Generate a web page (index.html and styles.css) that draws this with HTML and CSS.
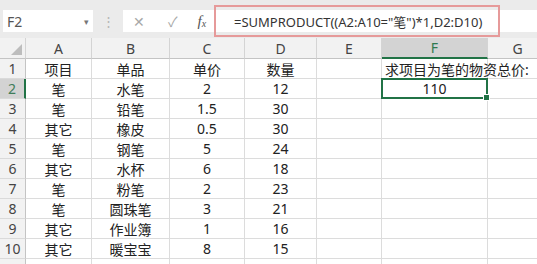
FILE: index.html
```html
<!DOCTYPE html>
<html lang="zh">
<head>
    <meta charset="UTF-8">
    <title>SUMPRODUCT</title>
    <link rel="stylesheet" href="styles.css">
</head>
<body>
    <div class="toolbar">
        <div class="name-box">
            <span>F2</span>
            <span class="arrow">▾</span>
        </div>
        <div class="dots">⋮</div>
        <div class="formula-bar">
            <div class="bar-icons">
                <span class="icon cancel">✕</span>
                <span class="icon enter">✓</span>
                <span class="icon fx">f<sub>x</sub></span>
            </div>
            <div class="formula-text">=SUMPRODUCT((A2:A10="笔")*1,D2:D10)</div>
        </div>
        <div class="mark"></div>
    </div>

    <div class="sheet">
        <div class="corner"><span class="tri"></span></div>
        <div class="col-head">A</div>
        <div class="col-head">B</div>
        <div class="col-head">C</div>
        <div class="col-head">D</div>
        <div class="col-head">E</div>
        <div class="col-head active">F</div>
        <div class="col-head">G</div>

        <div class="row-head">1</div>
        <div class="cell">项目</div><div class="cell">单品</div><div class="cell">单价</div><div class="cell">数量</div><div class="cell"></div>
        <div class="cell left">求项目为笔的物资总价:</div><div class="cell"></div>

        <div class="row-head active">2</div>
        <div class="cell">笔</div><div class="cell">水笔</div><div class="cell">2</div><div class="cell">12</div><div class="cell"></div>
        <div class="cell selected">110<span class="handle"></span></div><div class="cell"></div>

        <div class="row-head">3</div>
        <div class="cell">笔</div><div class="cell">铅笔</div><div class="cell">1.5</div><div class="cell">30</div><div class="cell"></div><div class="cell"></div><div class="cell"></div>

        <div class="row-head">4</div>
        <div class="cell">其它</div><div class="cell">橡皮</div><div class="cell">0.5</div><div class="cell">30</div><div class="cell"></div><div class="cell"></div><div class="cell"></div>

        <div class="row-head">5</div>
        <div class="cell">笔</div><div class="cell">钢笔</div><div class="cell">5</div><div class="cell">24</div><div class="cell"></div><div class="cell"></div><div class="cell"></div>

        <div class="row-head">6</div>
        <div class="cell">其它</div><div class="cell">水杯</div><div class="cell">6</div><div class="cell">18</div><div class="cell"></div><div class="cell"></div><div class="cell"></div>

        <div class="row-head">7</div>
        <div class="cell">笔</div><div class="cell">粉笔</div><div class="cell">2</div><div class="cell">23</div><div class="cell"></div><div class="cell"></div><div class="cell"></div>

        <div class="row-head">8</div>
        <div class="cell">笔</div><div class="cell">圆珠笔</div><div class="cell">3</div><div class="cell">21</div><div class="cell"></div><div class="cell"></div><div class="cell"></div>

        <div class="row-head">9</div>
        <div class="cell">其它</div><div class="cell">作业簿</div><div class="cell">1</div><div class="cell">16</div><div class="cell"></div><div class="cell"></div><div class="cell"></div>

        <div class="row-head">10</div>
        <div class="cell">其它</div><div class="cell">暖宝宝</div><div class="cell">8</div><div class="cell">15</div><div class="cell"></div><div class="cell"></div><div class="cell"></div>

        <div class="row-head"></div>
        <div class="cell"></div><div class="cell"></div><div class="cell"></div><div class="cell"></div><div class="cell"></div><div class="cell"></div><div class="cell"></div>
    </div>
</body>
</html>
```

FILE: styles.css
```css
body {
    margin: 0;
    width: 537px;
    height: 264px;
    overflow: hidden;
    background-color: white;
    font-family: "Noto Sans", "Noto Sans CJK SC", sans-serif;
    font-size: 14px;
    color: #222;
}
.toolbar {
    position: relative;
    height: 38px;
    background-color: #ebebeb;
    display: flex;
    align-items: flex-start;
    padding-top: 10px;
    box-sizing: border-box;
}
.name-box {
    margin-left: 3px;
    width: 90px;
    height: 22px;
    background-color: white;
    display: flex;
    align-items: center;
    justify-content: space-between;
    padding: 0 4px;
    box-sizing: border-box;
    color: #555;
    font-size: 14px;
}
.name-box .arrow {
    font-size: 9px;
    color: #777;
}
.dots {
    width: 30px;
    height: 22px;
    line-height: 22px;
    text-align: center;
    color: #b5b5b5;
    font-size: 13px;
}
.formula-bar {
    flex: 1;
    height: 22px;
    background-color: white;
    display: flex;
    align-items: center;
}
.bar-icons {
    width: 92px;
    height: 22px;
    display: flex;
    align-items: center;
    border-right: 1px solid #d6d6d6;
    box-sizing: border-box;
}
.icon {
    color: #a8a8a8;
    font-size: 14px;
}
.cancel {
    margin-left: 10px;
}
.enter {
    margin-left: 23px;
}
.fx {
    margin-left: 20px;
    font-family: "Liberation Serif", serif;
    font-style: italic;
    color: #555;
    font-size: 15px;
}
.fx sub {
    font-size: 10px;
    vertical-align: -1px;
}
.formula-text {
    margin-left: 19px;
    color: #333;
    font-size: 13px;
    white-space: nowrap;
}
.mark {
    position: absolute;
    left: 214px;
    top: 5px;
    width: 286px;
    height: 32px;
    border: 2px solid #e69a9a;
    box-sizing: border-box;
}
.sheet {
    display: grid;
    grid-template-columns: 26px 66px 78px 75px 72px 65px 106px 60px;
    grid-template-rows: 21px;
    grid-auto-rows: 20px;
}
.corner, .col-head, .row-head {
    background-color: #f2f2f2;
    color: #444;
    box-sizing: border-box;
    border-right: 1px solid #d4d4d4;
    border-bottom: 1px solid #c4c4c4;
    display: flex;
    align-items: center;
    justify-content: center;
}
.corner {
    position: relative;
}
.tri {
    position: absolute;
    right: 3px;
    bottom: 3px;
    width: 0;
    height: 0;
    border-left: 11px solid transparent;
    border-bottom: 11px solid #bdbdbd;
}
.row-head {
    border-bottom: 1px solid #dadada;
    border-right: 1px solid #c4c4c4;
}
.col-head.active {
    background-color: #d3d3d3;
    color: #2f7a4f;
    border-bottom: 2px solid #217346;
}
.row-head.active {
    background-color: #d3d3d3;
    color: #3f7d5a;
    border-right: 2px solid #217346;
}
.cell {
    box-sizing: border-box;
    border-right: 1px solid #dcdcdc;
    border-bottom: 1px solid #dcdcdc;
    display: flex;
    align-items: center;
    justify-content: center;
    white-space: nowrap;
}
.cell.left {
    justify-content: flex-start;
    padding-left: 3px;
    overflow: visible;
}
.cell.selected {
    position: relative;
    border: 2px solid #217346;
    margin: -1px 0 0 -1px;
}
.handle {
    position: absolute;
    right: -4px;
    bottom: -4px;
    width: 5px;
    height: 5px;
    background-color: #217346;
    border: 1px solid white;
}
```
